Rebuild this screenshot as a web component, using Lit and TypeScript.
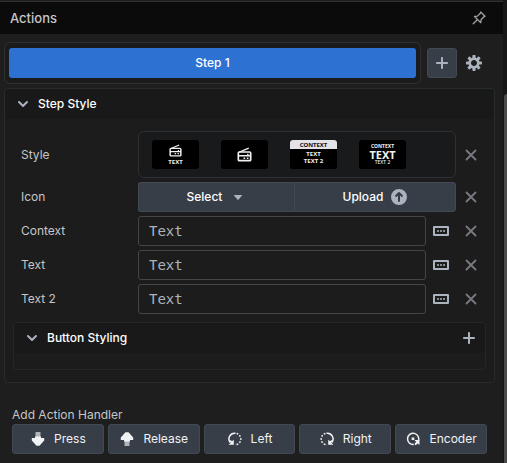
import { LitElement, html, css, svg, TemplateResult } from "lit";
import { customElement, property } from "lit/decorators.js";

const glyphs: Record<string, TemplateResult> = {
  chevron: svg`<path d="M12 5c-.28 0-.53.11-.71.29L8 8.59l-3.29-3.3a1.003 1.003 0 00-1.42 1.42l4 4c.18.18.43.29.71.29s.53-.11.71-.29l4-4A1.003 1.003 0 0012 5z"/>`,
  plus: svg`<path d="M13 7H9V3c0-.55-.45-1-1-1s-1 .45-1 1v4H3c-.55 0-1 .45-1 1s.45 1 1 1h4v4c0 .55.45 1 1 1s1-.45 1-1V9h4c.55 0 1-.45 1-1s-.45-1-1-1z"/>`,
  cog: svg`<path d="M15.19 6.39h-1.85c-.11-.37-.27-.71-.45-1.04l1.36-1.36c.31-.31.31-.82 0-1.13l-1.13-1.13c-.31-.31-.82-.31-1.13 0l-1.36 1.36c-.33-.17-.67-.33-1.04-.44V.79c0-.44-.36-.8-.8-.8h-1.6c-.44 0-.8.36-.8.8v1.86c-.39.12-.75.28-1.1.47l-1.3-1.3c-.3-.3-.79-.3-1.09 0L1.82 2.91c-.3.3-.3.79 0 1.09l1.3 1.3c-.2.34-.36.7-.48 1.09H.79c-.44 0-.8.36-.8.8v1.6c0 .44.36.8.8.8h1.85c.11.37.27.71.45 1.04l-1.36 1.36c-.31.31-.31.82 0 1.13l1.13 1.13c.31.31.82.31 1.13 0l1.36-1.36c.33.18.67.33 1.04.44v1.86c0 .44.36.8.8.8h1.6c.44 0 .8-.36.8-.8v-1.86c.39-.12.75-.28 1.1-.47l1.3 1.3c.3.3.79.3 1.09 0l1.09-1.09c.3-.3.3-.79 0-1.09l-1.3-1.3c.19-.35.36-.71.48-1.1h1.85c.44 0 .8-.36.8-.8v-1.6a.816.816 0 00-.81-.79zm-7.2 4.6c-1.66 0-3-1.34-3-3s1.34-3 3-3 3 1.34 3 3-1.34 3-3 3z"/>`,
  caret: svg`<path d="M12 6.5c0-.28-.22-.5-.5-.5h-7a.495.495 0 00-.37.83l3.5 4c.09.1.22.17.37.17s.28-.07.37-.17l3.5-4c.08-.09.13-.2.13-.33z"/>`,
  upload: svg`<path fill-rule="evenodd" d="M8 0a8 8 0 100 16A8 8 0 008 0zM7 12V6.4L5.7 7.7a1 1 0 01-1.4-1.4l3-3a1 1 0 011.4 0l3 3a1 1 0 01-1.4 1.4L9 6.4V12a1 1 0 01-2 0z"/>`,
  cross: svg`<path d="M3.5 3.5l9 9M12.500 3.500l-9 9" fill="none" stroke="currentColor" stroke-width="1.800" stroke-linecap="round"/>`,
  pin: svg`<g fill="none" stroke="currentColor" stroke-width="1.3" stroke-linejoin="round" stroke-linecap="round"><path d="M9.700 2l4.300 4.300-1.200.5-2.700 2.900-.3 3L3.500 6.500l3-.4 2.800-2.800z"/><path d="M6.300 9.700L2.200 13.800"/></g>`,
  field: svg`<path fill="none" stroke="currentColor" stroke-width="2" stroke-linejoin="round" d="M1 4h14v8H1z"/><path class="dim" d="M4 7h2v2H4zM7 7h2v2H7zM10 7h2v2h-2z"/>`,
  press: svg`<path opacity=".65" d="M5.500 1h5V6h-5z"/><path d="M5 5.500h6v1.500h3.200v2.600L9.500 14.800H6.500L1.800 9.600V7h3.200z"/>`,
  release: svg`<path opacity=".65" d="M5.500 10h5v5h-5z"/><path d="M5 10.500h6V9h3.200V6.400L9.500 1.200H6.500L1.800 6.400V9h3.200z"/>`,
  left: svg`<g fill="none" stroke="currentColor" stroke-width="1.500"><path d="M3.200 11.500A5.700 5.700 0 0 1 8.500 2.300"/><path stroke-dasharray="1.700 1.500" d="M9.600 2.500A5.700 5.700 0 0 1 8 13.700"/></g><path d="M1.500 13.800h5.300V8.800L5 10.300 3.600 9l-1 1.200 1.200 1.500z"/>`,
  right: svg`<g fill="none" stroke="currentColor" stroke-width="1.500"><path d="M12.800 11.500A5.700 5.700 0 0 0 7.500 2.300"/><path stroke-dasharray="1.700 1.500" d="M6.400 2.500A5.700 5.700 0 0 0 8 13.700"/></g><path d="M14.500 13.800H9.200V8.800l1.800 1.500L12.400 9l1 1.200-1.200 1.500z"/>`,
  encoder: svg`<path fill="none" stroke="currentColor" stroke-width="1.500" d="M13.300 10A5.600 5.600 0 1 0 8.800 13.400"/><path d="M9.300 8.900h5.200v5L12.700 12.400 10.700 14.200 9.400 12.900l1.800-2.100zM6.700 6.500h2.600v2.600H6.700z"/>`,
  radio: svg`<path d="M2.500 5.500L12.500 1.200" stroke="currentColor" stroke-width="1.400"/><path fill-rule="evenodd" d="M2.500 4.500h11a2 2 0 012 2V13.500a2 2 0 01-2 2h-11a2 2 0 01-2-2V6.500a2 2 0 012-2zM2.300 6.200v2.300h8.500V7.300h1.500v1.200h1.400V6.200zM2.300 10.200v3.500h11.400v-3.500z"/><path d="M7 11.200h1.700v1.500H7zM10.500 11.200h1.700v1.500h-1.700z"/>`,
};

@customElement("ui-icon")
class UiIcon extends LitElement {
  @property() name = "plus";
  static styles = css`
    :host { display: block; flex: none; width: 16px; height: 16px; }
    svg { display: block; width: 100%; height: 100%; fill: currentColor; }
    .dim { fill: #858b95; }
  `;
  render() {
    return html`<svg viewBox="0 0 16 16" aria-hidden="true">${glyphs[this.name]}</svg>`;
  }
}

@customElement("app-root")
class AppRoot extends LitElement {
  static styles = css`
    :host {
      display: flex;
      min-height: 100vh;
      background: #1e1e1e;
      color: #c5c6c8;
      font: 12px/16px Inter, "Liberation Sans", sans-serif;
    }
    * { box-sizing: border-box; }
    button { font: inherit; color: inherit; margin: 0; padding: 0; border: 0; background: none; display: flex; align-items: center; }
    h1, h2 { margin: 0; font: inherit; }
    .main { flex: 1; min-width: 0; border-top: 1px solid #1e1e1e; }
    .track { width: 4px; background: #171717; padding: 94px 0 0 1px; display: flex; }
    .thumb { flex: 1; background: #4b4b4b; border-radius: 3px 0 0 0; }
    .top {
      display: flex; align-items: center; justify-content: space-between;
      height: 33px; padding: 0 16px 0 10px;
      background: #0b0b0b; border-top: 1px solid #303030;
      font-size: 13px; font-weight: 500;
    }
    .top button { color: #a0a0a0; }
    .steps { display: flex; align-items: center; padding: 8px 0 4px 4px; }
    .tabs { flex: 1; padding: 5px 4px; margin-right: 6px; border: 1px solid #2d2f31; border-radius: 6px; background: #1a1b1d; }
    .tab { width: 100%; height: 30px; justify-content: center; border-radius: 3px; background: #2d72d2; color: #fff; font-weight: 500; }
    .solid { height: 30px; justify-content: center; gap: 8px; background: #383e47; border: 1px solid #434954; border-radius: 3px; color: #f1f2f4; }
    .add { width: 30px; color: #abb3bf; }
    .gear { padding: 0 21px 0 9px; color: #abb3bf; }
    .panel { border: 1px solid #272d2b; border-radius: 4px; background: #1c1c1c; }
    .outer { margin: 0 8px 0 4px; }
    .head { display: flex; align-items: center; height: 30px; padding: 0 8px 0 10px; background: #191919; color: #abb3bf; border-radius: 4px; }
    .head .toggle { flex: 1; gap: 7px; }
    .head .title { color: #fff; font-weight: 500; }
    .rows { display: grid; gap: 4px; padding: 12px 8px 8px 16px; }
    .row { display: grid; grid-template-columns: 117px 1fr 30px; align-items: center; }
    .clear { justify-content: center; height: 30px; color: #777a80; }
    .styles { display: flex; gap: 22px; height: 47px; align-items: center; padding: 0 13px; border: 1px solid #2d2f33; border-radius: 6px; background: #191a1c; }
    .swatch {
      width: 47px; height: 29px; border-radius: 3px; background: #000; color: #f1f1f3; overflow: hidden;
      flex-direction: column; justify-content: center;
      font: 700 6px/7px "Noto Sans", sans-serif;
    }
    .swatch ui-icon { width: 15px; height: 15px; }
    .small ui-icon { width: 13px; height: 13px; }
    .small { gap: 2px; }
    .banner { justify-content: flex-start; }
    .bar { width: 100%; height: 9px; line-height: 10px; margin-bottom: 2px; background: #e2e2e8; color: #111; }
    .big { font-size: 11px; line-height: 11px; }
    .tiny { font-size: 5px; line-height: 5px; }
    .light { font-weight: 500; }
    .group { display: flex; }
    .group .solid { flex: 1 1 auto; color: #fff; font-weight: 500; }
    .group .solid:first-child { border-radius: 3px 0 0 3px; border-right: 0; }
    .group .solid:last-child { border-radius: 0 3px 3px 0; }
    .group ui-icon { color: #abb3bf; }
    .entry { display: flex; align-items: center; }
    .entry input {
      flex: 1; min-width: 0; height: 30px; padding: 0 10px; margin: 0;
      border: 1px solid #454545; border-radius: 3px; background: #1c1c1c; color: #f1f2f4;
      font: 14px "DejaVu Sans Mono", monospace;
    }
    .entry input::placeholder { color: #abb3bf; opacity: 1; }
    .entry button { padding: 0 7px; color: #abb3bf; }
    .inner { margin: 0 8px 12px; border-color: #262828; }
    .body { height: 16px; }
    .handlers { padding: 24px 16px 8px 12px; }
    .buttons { display: flex; gap: 4px; margin-top: 1px; }
    .buttons .solid { flex: 1; }
  `;

  private clear(label: string) {
    return html`<button class="clear" aria-label="Clear ${label}"><ui-icon name="cross"></ui-icon></button>`;
  }

  private textRow(label: string, id: string) {
    return html`<div class="row">
      <label for=${id}>${label}</label>
      <div class="entry">
        <input id=${id} type="text" placeholder="Text" />
        <button aria-label="Insert variable"><ui-icon name="field"></ui-icon></button>
      </div>
      ${this.clear(label)}
    </div>`;
  }

  render() {
    const handlers = ["Press", "Release", "Left", "Right", "Encoder"];
    return html`
      <main class="main">
        <header class="top">
          <h1>Actions</h1>
          <button aria-label="Pin"><ui-icon name="pin"></ui-icon></button>
        </header>
        <div class="steps">
          <div class="tabs"><button class="tab">Step 1</button></div>
          <button class="solid add" aria-label="Add step"><ui-icon name="plus"></ui-icon></button>
          <button class="gear" aria-label="Settings"><ui-icon name="cog"></ui-icon></button>
        </div>
        <section class="panel outer">
          <div class="head">
            <button class="toggle" aria-expanded="true"><ui-icon name="chevron"></ui-icon><span class="title">Step Style</span></button>
          </div>
          <div class="rows">
            <div class="row">
              <span>Style</span>
              <div class="styles">
                <button class="swatch small"><ui-icon name="radio"></ui-icon><span>TEXT</span></button>
                <button class="swatch" aria-label="Icon only"><ui-icon name="radio"></ui-icon></button>
                <button class="swatch banner"><span class="bar">CONTEXT</span><span>TEXT</span><span>TEXT 2</span></button>
                <button class="swatch"><span class="tiny">CONTEXT</span><span class="big">TEXT</span><span class="tiny light">TEXT 2</span></button>
              </div>
              ${this.clear("Style")}
            </div>
            <div class="row">
              <span>Icon</span>
              <div class="group">
                <button class="solid" aria-haspopup="true">Select<ui-icon name="caret"></ui-icon></button>
                <button class="solid">Upload<ui-icon name="upload"></ui-icon></button>
              </div>
              ${this.clear("Icon")}
            </div>
            ${this.textRow("Context", "context")}
            ${this.textRow("Text", "text")}
            ${this.textRow("Text 2", "text2")}
          </div>
          <section class="panel inner">
            <div class="head">
              <button class="toggle" aria-expanded="true"><ui-icon name="chevron"></ui-icon><span class="title">Button Styling</span></button>
              <button aria-label="Add styling"><ui-icon name="plus"></ui-icon></button>
            </div>
            <div class="body"></div>
          </section>
        </section>
        <section class="handlers">
          <h2>Add Action Handler</h2>
          <div class="buttons">
            ${handlers.map((h) => html`<button class="solid"><ui-icon name=${h.toLowerCase()}></ui-icon>${h}</button>`)}
          </div>
        </section>
      </main>
      <div class="track"><div class="thumb"></div></div>
    `;
  }
}
